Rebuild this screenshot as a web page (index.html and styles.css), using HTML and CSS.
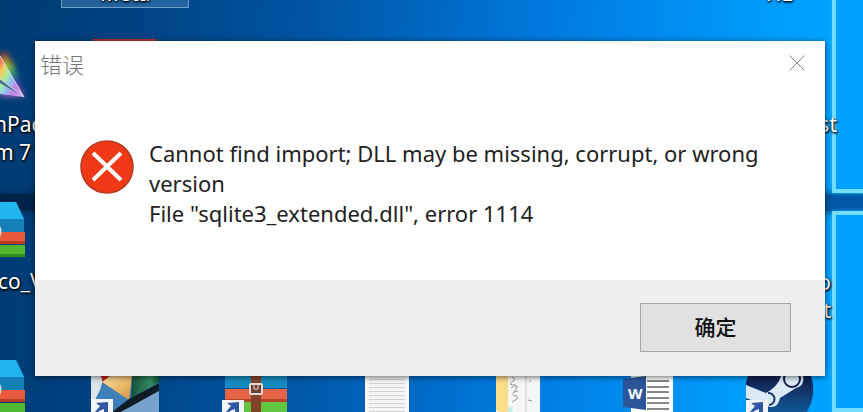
FILE: index.html
```html
<!DOCTYPE html>
<html lang="zh-CN">
<head>
    <meta charset="UTF-8">
    <meta name="viewport" content="width=device-width, initial-scale=1.0">
    <title>错误</title>
    <link rel="stylesheet" href="styles.css">
</head>
<body>
    <main class="desktop">
        <!-- Wallpaper window panes -->
        <div class="beam"></div>
        <div class="pane pane-top"></div>
        <div class="pane pane-bottom"></div>

        <!-- Desktop shortcuts -->
        <div class="selected-item"><span class="label">Meta</span></div>
        <span class="label label-hl">HL</span>
        <div class="red-icon"></div>

        <svg class="icon prism" viewBox="0 0 36 60" aria-hidden="true">
            <defs>
                <linearGradient id="rainbow" x1="0" y1="0" x2="1" y2="1">
                    <stop offset="0" stop-color="#f04848"/>
                    <stop offset=".22" stop-color="#f5d060"/>
                    <stop offset=".38" stop-color="#a8eca0"/>
                    <stop offset=".52" stop-color="#90c8f0"/>
                    <stop offset=".7" stop-color="#c080e8"/>
                    <stop offset="1" stop-color="#e8b0f0"/>
                </linearGradient>
                <linearGradient id="halo" x1="0" y1="0" x2="0" y2="1">
                    <stop offset="0" stop-color="#e02020"/>
                    <stop offset=".3" stop-color="#a0d020"/>
                    <stop offset=".5" stop-color="#20a080"/>
                    <stop offset=".7" stop-color="#5030b0"/>
                    <stop offset="1" stop-color="#d070c0"/>
                </linearGradient>
                <filter id="glow" x="-50%" y="-50%" width="200%" height="200%"><feGaussianBlur stdDeviation="3"/></filter>
            </defs>
            <path d="M0 4H6L14 18L23 47H0z" fill="url(#halo)" filter="url(#glow)"/>
            <path d="M0 7L24 48L0 45z" fill="url(#rainbow)"/>
            <path d="M0 30L24 48L0 34z" fill="#416e88"/>
            <path d="M0 7L24 48L0 30" fill="none" stroke="#d8d8ee"/>
        </svg>
        <div class="label label-pack">nPack<br>m 7</div>

        <svg class="icon books books-one" viewBox="0 0 26 56" aria-hidden="true">
            <path d="M0 0H16L24 17V30H0z" fill="#1580b8"/>
            <path d="M0 0H16L24 17H0z" fill="#20b4f0"/>
            <path d="M0 30H25V42H0z" fill="#e85a3c"/>
            <path d="M0 39H25V42H0z" fill="#b83c28"/>
            <path d="M0 43H25V55H0z" fill="#50b830"/>
            <path d="M0 52H25V55H0z" fill="#308c20"/>
            <path d="M0 24Q3 29 0 35z" fill="#ddd"/>
        </svg>
        <span class="label label-co">co_V</span>
        <svg class="icon books books-two" viewBox="0 0 26 56" aria-hidden="true">
            <path d="M0 0H16L24 17V30H0z" fill="#1580b8"/>
            <path d="M0 0H16L24 17H0z" fill="#20b4f0"/>
            <path d="M0 30H25V42H0z" fill="#e85a3c"/>
            <path d="M0 39H25V42H0z" fill="#b83c28"/>
            <path d="M0 43H25V55H0z" fill="#50b830"/>
            <path d="M0 24Q3 29 0 35z" fill="#ddd"/>
        </svg>

        <svg class="icon photo" viewBox="0 0 68 36" aria-hidden="true">
            <defs>
                <linearGradient id="green" x1="0" y1="0" x2="1" y2="0">
                    <stop offset="0" stop-color="#164f3c"/>
                    <stop offset=".7" stop-color="#338e62"/>
                    <stop offset="1" stop-color="#125437"/>
                </linearGradient>
                <linearGradient id="gold" x1="0" y1="0" x2="1" y2="1">
                    <stop offset="0" stop-color="#ffe3a0"/>
                    <stop offset="1" stop-color="#d6943c"/>
                </linearGradient>
            </defs>
            <path d="M0 0H68V36H0z" fill="#3d7fb8"/>
            <path d="M0 0H13L9 14L4 24H0z" fill="#dde5ea"/>
            <path d="M10 0H20L12 8z" fill="#c52027"/>
            <path d="M19 0H41L38 24L11 6z" fill="url(#gold)"/>
            <path d="M41 0H68V6L40 22z" fill="url(#green)"/>
            <path d="M68 7V15L30 36H21L38 23z" fill="#101c24"/>
            <path d="M68 15V36H30z" fill="#76a2cc"/>
            <path d="M0 23H22V36H0z" fill="#f2f4f7"/>
            <path d="M5 27L17 26V36H13V33Q9 34 7 36H4L9 30z" fill="#2f57a5"/>
        </svg>

        <svg class="icon archive" viewBox="0 0 66 36" aria-hidden="true">
            <path d="M3 0H65V12H3z" fill="#158bc0"/>
            <path d="M3 13H65V24H3z" fill="#e66346"/>
            <path d="M3 23H65V26H3z" fill="#b5422c"/>
            <path d="M3 26H65V36H3z" fill="#62c63e"/>
            <path d="M29 0H39V36H29z" fill="#82432c"/>
            <rect x="28" y="8" width="12" height="10" rx="1" fill="#72402e" stroke="#e2dbd3" stroke-width="2"/>
            <path d="M32 8V13H36V8" fill="none" stroke="#e2dbd3" stroke-width="1"/>
            <path d="M0 24H22V36H0z" fill="#f2f4f7"/>
            <path d="M5 27L17 26V36H13V33Q9 34 7 36H4L9 30z" fill="#2f57a5"/>
        </svg>

        <div class="text-file"></div>

        <svg class="icon notes" viewBox="0 0 44 36" aria-hidden="true">
            <path d="M0 0H44V36H0z" fill="#f6f6f6"/>
            <path d="M0 0H12V36H3L0 34z" fill="#fadc8a"/>
            <path d="M16 1Q21 3 16 6T20 9M15 12Q24 7 20 13T16 18M18 16L22 15M17 20Q22 18 21 23L16 26M33 5H35M32 24L36 25" fill="none" stroke="#999"/>
            <path d="M12 32Q15 28 17 36H12z" fill="#c4ecea"/>
            <path d="M30 0V36" stroke="#ccc"/>
        </svg>

        <svg class="icon word" viewBox="0 0 52 36" aria-hidden="true">
            <path d="M8 0H50V36H8z" fill="#fff"/>
            <path d="M24 5H46M24 11H46M24 16H46M24 22H46M24 27H46M24 33H46" stroke="#888" stroke-width="2"/>
            <path d="M0 3L23 0V34L0 31z" fill="#2b579a"/>
            <text class="word-mark" x="5" y="23">W</text>
        </svg>

        <svg class="icon steam" viewBox="0 0 68 36" aria-hidden="true">
            <defs>
                <linearGradient id="navy" x1="0" y1="0" x2="0" y2="1">
                    <stop offset="0" stop-color="#111d4a"/>
                    <stop offset="1" stop-color="#125795"/>
                </linearGradient>
            </defs>
            <path d="M2 0H65Q71 18 61 36H0V6z" fill="url(#navy)"/>
            <path d="M0 9L20 17Q28 13 33 5L35 0H57Q59 10 50 12L34 22Q32 32 24 31L0 22z" fill="#dceaf8"/>
            <circle cx="46" cy="3" r="8" fill="#dceaf8" stroke="#111d4a" stroke-width="2"/>
            <path d="M22 17A6 6 0 1 1 23 29" fill="none" stroke="#163568" stroke-width="2"/>
            <path d="M0 24H22V36H0z" fill="#f2f4f7"/>
            <path d="M5 27L17 26V36H13V33Q9 34 7 36H4L9 30z" fill="#2f57a5"/>
        </svg>

        <span class="label label-st">st</span>
        <div class="label label-ot">o<br>t</div>

        <section class="dialog" role="alertdialog" aria-labelledby="dialog-title" aria-describedby="dialog-message">
            <header class="title-bar">
                <h1 class="title" id="dialog-title">错误</h1>
                <button class="close" type="button" aria-label="关闭">
                    <svg class="close-icon" viewBox="0 0 16 16" aria-hidden="true">
                        <path d="M0.5 0.5L15.5 15.5M15.5 0.5L0.5 15.5" stroke="#888" fill="none"/>
                    </svg>
                </button>
            </header>
            <div class="content">
                <svg class="error-icon" viewBox="0 0 54 54" aria-hidden="true">
                    <circle cx="27" cy="27" r="26" fill="#f03a17" stroke="#b83820" stroke-width="1.5"/>
                    <path d="M13 13L41 40M41 13L13 40" stroke="#fff" stroke-width="4"/>
                </svg>
                <p class="message" id="dialog-message">Cannot find import; DLL may be missing, corrupt, or wrong version<br>File "sqlite3_extended.dll", error 1114</p>
            </div>
            <footer class="actions">
                <button class="ok" type="button">确定</button>
            </footer>
        </section>
    </main>
</body>
</html>
```

FILE: styles.css
```css
body {
    margin: 0;
    font-family: "Noto Sans", "Noto Sans CJK SC", sans-serif;
}

.desktop {
    position: relative;
    box-sizing: border-box;
    min-height: 100vh;
    padding: 41px 38px 35px 35px;
    overflow: hidden;
    background: linear-gradient(95deg, #003b73 0%, #004282 15%, #0055a4 35%, #0078dc 60%, #0091f5 78%, #00a2ff 90%);
}

.dialog {
    position: relative;
    background-color: #fff;
    box-shadow: 0 1px 6px rgba(0, 0, 0, 0.6);
}

.title-bar {
    display: flex;
    justify-content: space-between;
    align-items: center;
    height: 43px;
    padding: 0 20px 0 5px;
}

.title {
    margin: 0;
    font-size: 22px;
    font-weight: 300;
    font-family: "Noto Sans CJK SC", sans-serif;
    color: #777;
}

.close {
    display: flex;
    padding: 0;
    border: none;
    background: none;
}

.close-icon {
    width: 16px;
    height: 16px;
}

.content {
    display: flex;
    align-items: center;
    gap: 15px;
    padding: 54px 35px 52px 45px;
}

.error-icon {
    flex: none;
    align-self: flex-start;
    margin-top: 2px;
    width: 54px;
    height: 54px;
}

.message {
    margin: 0;
    font-size: 22px;
    line-height: 30px;
    color: #222;
}

.actions {
    display: flex;
    justify-content: flex-end;
    padding: 23px 34px 24px;
    background-color: #efefef;
}

.ok {
    width: 151px;
    height: 49px;
    padding: 0 0 4px;
    border: 1px solid #a6a6a6;
    background-color: #e1e1e1;
    font-family: "Noto Sans CJK SC", sans-serif;
    font-size: 21px;
    font-weight: 500;
    color: #111;
}

/* Wallpaper */
.beam {
    position: absolute;
    top: 194px;
    right: 0;
    width: 100%;
    height: 17px;
    background: linear-gradient(90deg, #002248, #0058a5);
    box-shadow: 0 0 10px rgba(0, 34, 72, 0.8);
}

.pane {
    position: absolute;
    right: -10px;
    width: 33px;
    border: 4px solid #74dcff;
    background-color: #00a2ff;
    box-shadow: 0 0 4px #19b7ff;
}

.pane-top {
    top: -10px;
    height: 195px;
}

.pane-bottom {
    top: 211px;
    bottom: 0;
}

/* Desktop items */
.icon {
    position: absolute;
}

.label {
    position: absolute;
    font-size: 21px;
    line-height: 28px;
    color: #fff;
    text-shadow: 1px 1px 2px #000, 0 1px 3px #000;
    white-space: nowrap;
}

.selected-item {
    position: absolute;
    top: -30px;
    left: 61px;
    width: 126px;
    height: 36px;
    border: 1px solid #6d9fc9;
    background-color: rgba(100, 160, 210, 0.35);
}

.selected-item .label {
    top: 8px;
    left: 38px;
}

.label-hl {
    top: -21px;
    left: 766px;
}

.label-pack {
    top: 110px;
    left: -6px;
}

.label-co {
    top: 267px;
    left: -2px;
}

.label-st {
    top: 110px;
    right: 26px;
}

.label-ot {
    top: 268px;
    right: 32px;
    text-align: right;
}

.red-icon {
    position: absolute;
    top: 39px;
    left: 93px;
    width: 64px;
    height: 10px;
    background-color: #b83238;
}

.prism {
    top: 49px;
    left: 0;
    width: 36px;
    height: 60px;
}

.books {
    left: 0;
    width: 26px;
    height: 56px;
}

.books-one {
    top: 202px;
}

.books-two {
    top: 360px;
}

.photo {
    top: 376px;
    left: 91px;
    width: 68px;
    height: 36px;
}

.archive {
    top: 376px;
    left: 222px;
    width: 66px;
    height: 36px;
}

.text-file {
    position: absolute;
    top: 376px;
    left: 365px;
    width: 36px;
    height: 36px;
    border: solid #f8f8f8;
    border-width: 0 4px;
    background: repeating-linear-gradient(#f5f5f5 0 3px, #d2d2d2 3px 4px);
}

.notes {
    top: 376px;
    left: 496px;
    width: 44px;
    height: 36px;
}

.word {
    top: 376px;
    left: 623px;
    width: 52px;
    height: 36px;
}

.word-mark {
    font-family: "Noto Sans", sans-serif;
    font-size: 15px;
    font-weight: bold;
    fill: #fff;
}

.steam {
    top: 376px;
    left: 746px;
    width: 68px;
    height: 36px;
}
```
